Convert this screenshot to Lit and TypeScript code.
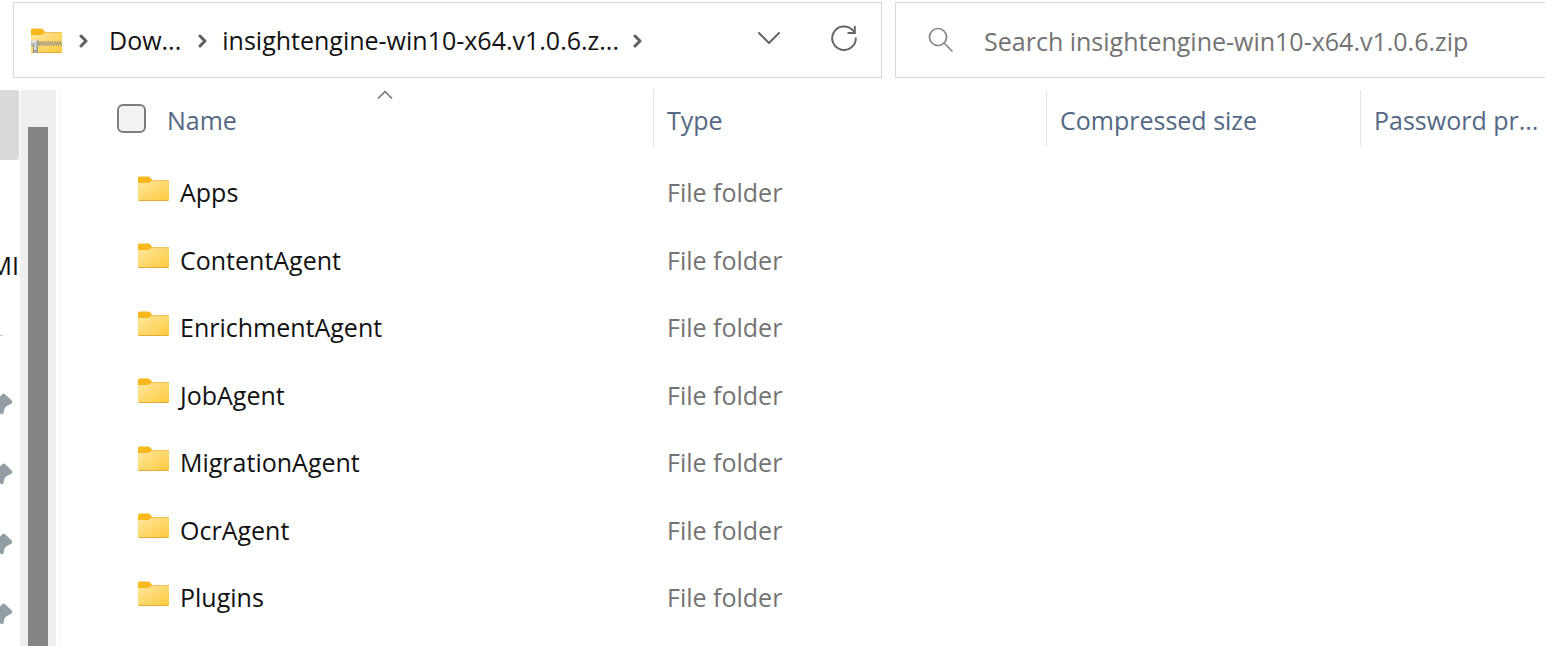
import { LitElement, html, css, svg } from "lit";
import { customElement, state } from "lit/decorators.js";

interface Entry {
  name: string;
  type: string;
}

const ENTRIES: Entry[] = [
  "Apps",
  "ContentAgent",
  "EnrichmentAgent",
  "JobAgent",
  "MigrationAgent",
  "OcrAgent",
  "Plugins",
].map((name) => ({ name, type: "File folder" }));

const folderShape = svg`
  <defs>
    <linearGradient id="face" x1="0" y1="0" x2="1" y2="1">
      <stop offset="0" stop-color="#ffe8a0" />
      <stop offset="1" stop-color="#fdc93c" />
    </linearGradient>
  </defs>
  <path d="M0 2a1.500 1.500 0 0 1 1.500-1.500h8.500q1.200 0 2 .8l2.500 2.900h15a1.500 1.500 0 0 1 1.500 1.500V10H0z" fill="#f8b91e" />
  <path d="M0 7h9.500q1.500 0 2.600-1l1.400-1.200H30a1 1 0 0 1 1 1V23.500a1.500 1.500 0 0 1-1.500 1.500h-28A1.500 1.500 0 0 1 0 23.500z" fill="url(#face)" />
  <path d="M13.500 4.700H31" stroke="#eec257" stroke-width="1" />
  <path d="M.6 24.500H30.400" stroke="#e3ab35" stroke-width="1" />`;

const folderIcon = html`<svg class="folder" viewBox="0 0 31 25" fill="none" aria-hidden="true">${folderShape}</svg>`;

const zipIcon = html`<svg class="folder" viewBox="0 0 31 25" fill="none" aria-hidden="true">
  ${folderShape}
  <path d="M7 15.500H31" stroke="#d9c78f" stroke-width="4" />
  <path d="M7 14H31M8 17H31" stroke="#857654" stroke-width="1" stroke-dasharray="1.300 1.100" />
  <path d="M7 15.500H31" stroke="#b5a477" stroke-width="1" />
  <path d="M0 12.500h7.500v5h-1v7.500H2.500v-7.500H0z" fill="#c2c2be" />
  <path d="M.5 13.500h5M4 17.500v5" stroke="#f0f0ed" stroke-width="1.400" />
  <path d="M7 12.500v5M6.200 17.500v7.500M.3 17.300h2.300M2.600 18v7" stroke="#84827c" stroke-width="1" />
  <path d="M4.400 22v2" stroke="#84827c" stroke-width="1.200" />
</svg>`;

const crumbArrow = html`<svg class="crumb-arrow" viewBox="0 0 10 14" fill="none" aria-hidden="true">
  <path d="M2 2l5 5-5 5" stroke="#606060" stroke-width="3" stroke-linejoin="round" stroke-linecap="round" />
</svg>`;

const pinIcon = html`<svg class="pin" viewBox="0 0 13 22" aria-hidden="true">
  <path d="M0 3.500L2.300 1.200Q3.500 0 4.800 1L11.700 7.500Q13 9.300 11.600 10.500L6.500 13.200Q4.600 14.500 4.200 16.500L3.400 20.500Q2.500 22 0 20.300z" fill="#929da4" />
</svg>`;

@customElement("app-root")
export class AppRoot extends LitElement {
  @state() private allSelected = false;

  static styles = css`
    :host {
      display: flex;
      flex-direction: column;
      height: 100vh;
      overflow: hidden;
      background: #fff;
      color: #111;
      font-family: "Open Sans", "Noto Sans", sans-serif;
      font-size: 25px;
      line-height: 34px;
    }
    *, *::before, *::after { box-sizing: border-box; }
    svg { display: block; flex: none; }
    button {
      padding: 0;
      border: 0;
      background: none;
      color: inherit;
      font: inherit;
      white-space: nowrap;
    }
    .bar {
      display: flex;
      flex: none;
      gap: 13px;
      padding: 2px 0 12px 13px;
    }
    .box {
      display: flex;
      align-items: center;
      height: 76px;
      min-width: 0;
      border: 1px solid #d9d9d9;
    }
    .address { flex: 870 1 0; padding: 0 23px 0 17px; }
    .search { flex: 649 1 0; border-right: 0; padding-left: 32px; gap: 30px; }
    .folder { width: 31px; height: 25px; }
    .crumbs { display: flex; align-items: center; flex: 1; min-width: 0; }
    .crumb-arrow { width: 10px; height: 14px; margin: 2px 0 0 17px; }
    .crumb { margin-left: 20px; }
    .crumb.current { margin-left: 14px; }
    .crumb.current + .crumb-arrow { margin-left: 14px; }
    .tools { display: flex; align-items: center; gap: 49px; padding-bottom: 4px; }
    .down { width: 24px; height: 14px; }
    .refresh { width: 28px; height: 28px; }
    .glass { width: 26px; height: 26px; }
    .field {
      flex: 1;
      min-width: 0;
      padding: 2px 0 0;
      border: 0;
      outline: 0;
      background: none;
      color: #111;
      font: inherit;
      height: 40px;
    }
    .field::placeholder { color: #737373; opacity: 1; }
    .body { display: flex; flex: 1; min-height: 0; }
    .side { flex: none; width: 19px; overflow: hidden; }
    .side-item {
      display: flex;
      align-items: center;
      justify-content: flex-end;
      height: 70px;
    }
    .side-item.selected { background: #d9d9d9; border-radius: 0 3px 3px 0; }
    .side-item.pinned { justify-content: flex-start; padding-bottom: 2px; }
    .side-item.rule::before {
      content: "";
      width: 3px;
      height: 1px;
      margin-right: auto;
      background: #c8c8c8;
    }
    .pin { width: 13px; height: 22px; }
    .track {
      flex: none;
      width: 36px;
      margin-left: 1px;
      padding: 37px 8px 0;
      background: #efefef;
    }
    .thumb { height: 100%; background: #858585; }
    .list {
      flex: 1;
      min-width: 0;
      overflow: hidden;
      margin-left: 3px;
      padding-left: 56px;
      border-left: 2px solid #f7f7f7;
    }
    .files {
      width: 100%;
      border-collapse: separate;
      border-spacing: 0;
      table-layout: fixed;
    }
    .col-name { width: 536px; }
    .col-type { width: 393px; }
    .col-size { width: 314px; }
    .head {
      position: relative;
      height: 57px;
      padding: 2px 14px 0 13px;
      border-left: 1px solid #e5e5e5;
      color: #546883;
      font-weight: 400;
      text-align: left;
      vertical-align: middle;
      white-space: nowrap;
    }
    .head:last-child { padding-right: 0; }
    .head.first { border-left: 0; padding-left: 0; }
    .head-row { display: flex; align-items: center; gap: 21px; }
    .sort { position: absolute; top: 0; left: 50%; width: 16px; height: 9px; margin-left: -8px; }
    .check {
      appearance: none;
      flex: none;
      width: 29px;
      height: 29px;
      margin: 0 0 2px;
      border: 2px solid #7d7d7d;
      border-radius: 6px;
      background: #f3f3f3;
    }
    .check:checked { background: #0067c0; }
    .gap { height: 11px; padding: 0; }
    .row { height: 67px; }
    .row:nth-child(odd) { height: 68px; }
    .cell { padding: 0 14px; color: #737373; vertical-align: middle; }
    .cell.name { padding: 0 0 0 21px; color: #111; }
    .entry { display: flex; align-items: center; gap: 11px; }
    .entry .folder { margin-bottom: 8px; }
  `;

  private toggleAll() {
    this.allSelected = !this.allSelected;
  }

  render() {
    return html`
      <header class="bar">
        <div class="box address">
          <nav class="crumbs" aria-label="Path">
            ${zipIcon} ${crumbArrow}
            <button class="crumb">Dow...</button>
            ${crumbArrow}
            <button class="crumb current">insightengine-win10-x64.v1.0.6.z...</button>
            ${crumbArrow}
          </nav>
          <div class="tools">
            <button aria-label="Previous locations">
              <svg class="down" viewBox="0 0 24 14" fill="none">
                <path d="M2 2l10 10L22 2" stroke="#666" stroke-width="2" stroke-linecap="round" stroke-linejoin="round" />
              </svg>
            </button>
            <button aria-label="Refresh">
              <svg class="refresh" viewBox="0 0 28 28" fill="none" stroke="#666" stroke-width="2">
                <path d="M25.800 13.500A11.800 11.800 0 1 1 22.500 6L24.500 8.500" />
                <path d="M24.800 2V9H17.500" />
              </svg>
            </button>
          </div>
        </div>
        <div class="box search">
          <svg class="glass" viewBox="0 0 26 26" fill="none" stroke="#858585" stroke-width="1.700" aria-hidden="true">
            <circle cx="10" cy="10" r="8.500" />
            <path d="M16 16l8 8" stroke-linecap="round" />
          </svg>
          <input class="field" type="search" aria-label="Search" placeholder="Search insightengine-win10-x64.v1.0.6.zip" />
        </div>
      </header>
      <div class="body">
        <aside class="side">
          <div class="side-item selected"></div>
          <div class="side-item"></div>
          <div class="side-item">MI</div>
          <div class="side-item rule"></div>
          ${[0, 1, 2, 3].map(() => html`<div class="side-item pinned">${pinIcon}</div>`)}
        </aside>
        <div class="track"><div class="thumb"></div></div>
        <main class="list">
          <table class="files">
            <colgroup>
              <col class="col-name" />
              <col class="col-type" />
              <col class="col-size" />
              <col />
            </colgroup>
            <thead>
              <tr>
                <th class="head first" scope="col" aria-sort="ascending">
                  <svg class="sort" viewBox="0 0 16 9" fill="none" aria-hidden="true">
                    <path d="M1 8.500L8 1.500L15 8.500" stroke="#707070" stroke-width="1.500" />
                  </svg>
                  <div class="head-row">
                    <input
                      class="check"
                      type="checkbox"
                      aria-label="Select all"
                      .checked=${this.allSelected}
                      @change=${this.toggleAll}
                    />
                    <button>Name</button>
                  </div>
                </th>
                <th class="head" scope="col"><button>Type</button></th>
                <th class="head" scope="col"><button>Compressed size</button></th>
                <th class="head" scope="col"><button>Password pr...</button></th>
              </tr>
            </thead>
            <tbody><tr><td class="gap" colspan="4"></td></tr></tbody>
            <tbody>
              ${ENTRIES.map(
                (entry) => html`<tr class="row">
                  <td class="cell name"><div class="entry">${folderIcon}<span>${entry.name}</span></div></td>
                  <td class="cell">${entry.type}</td>
                  <td class="cell"></td>
                  <td class="cell"></td>
                </tr>`
              )}
            </tbody>
          </table>
        </main>
      </div>
    `;
  }
}
